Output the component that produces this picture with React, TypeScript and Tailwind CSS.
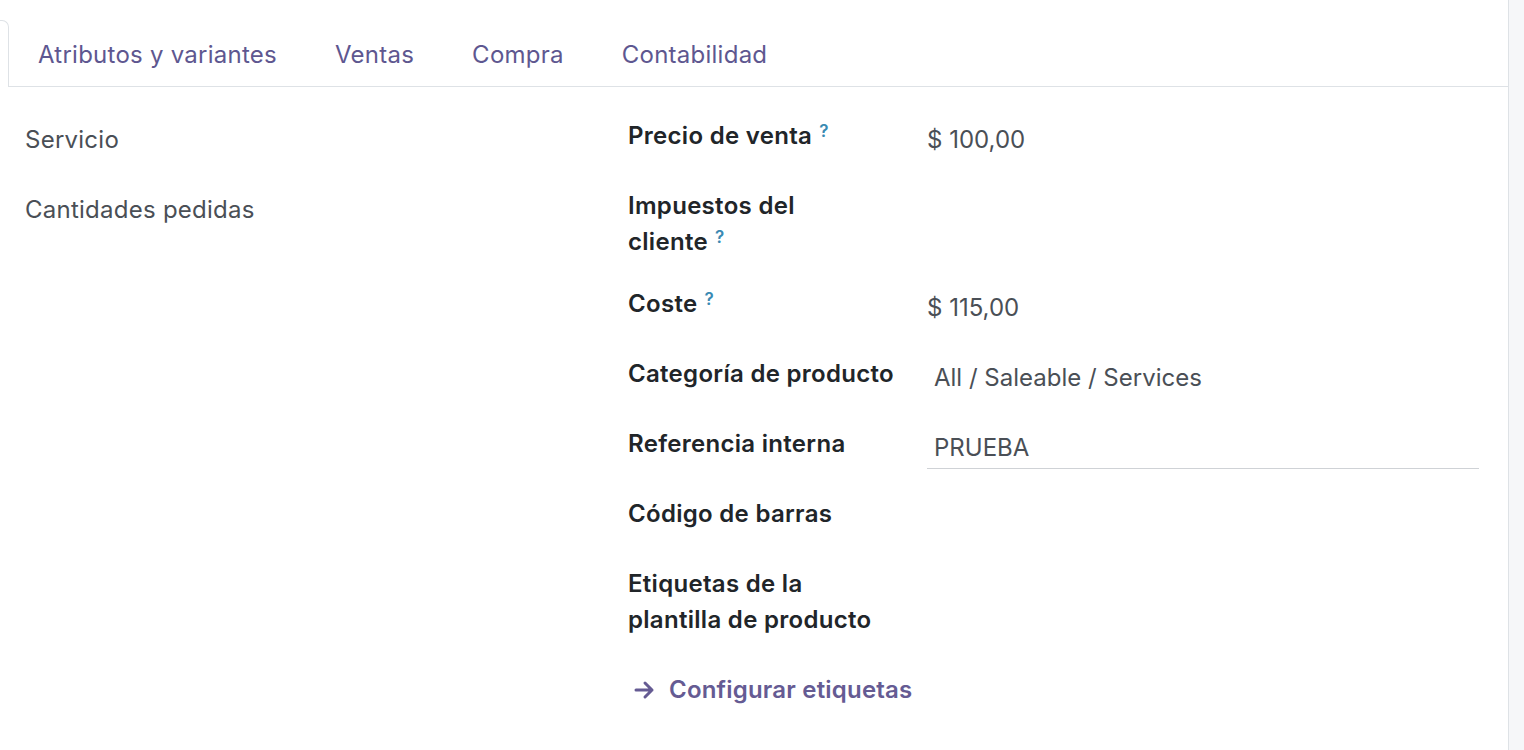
import React from "react";

const Help = () => (
  <sup className="ml-[7px] text-[17px] font-semibold text-[#3a8ab3] relative top-[-7px] tracking-normal">?</sup>
);

export default function App() {
  const tabs = ["Atributos y variantes", "Ventas", "Compra", "Contabilidad"];
  const rows: { label: React.ReactNode; value?: React.ReactNode }[] = [
    {
      label: (
        <>
          Precio de venta
          <Help />
        </>
      ),
      value: <span>$ 100,00</span>,
    },
    {
      label: (
        <>
          Impuestos del
          <br />
          cliente
          <Help />
        </>
      ),
    },
    {
      label: (
        <>
          Coste
          <Help />
        </>
      ),
      value: <span>$ 115,00</span>,
    },
    {
      label: <>Categoría de producto</>,
      value: <span className="pl-[7px]">All / Saleable / Services</span>,
    },
    {
      label: <>Referencia interna</>,
      value: (
        <div className="border-b border-[#cfd2d6] h-[41px] pl-[7px] flex items-center">PRUEBA</div>
      ),
    },
    { label: <>Código de barras</> },
    {
      label: (
        <>
          Etiquetas de la
          <br />
          plantilla de producto
        </>
      ),
    },
  ];

  return (
    <div
      className="flex min-h-[750px] bg-white text-[#212529]"
      style={{ fontFamily: "Inter, 'Noto Sans', 'Liberation Sans', sans-serif" }}
    >
      <div className="w-[1509px] shrink-0 border-r border-[#dee2e6] flex flex-col">
        <div className="pt-[20px] flex">
          <div className="w-[9px] h-[67px] border-t border-r border-[#dee2e6] rounded-tr-[7px]" />
          <div className="flex-1 flex border-b border-[#dee2e6] h-[67px] items-center pt-[3px]">
            {tabs.map((t) => (
              <div key={t} className="px-[29px] text-[24px] tracking-[0.25px] text-[#5e5790]">
                {t}
              </div>
            ))}
          </div>
        </div>
        <div className="flex pt-[31px] pl-[25px]">
          <div className="w-[603px] flex flex-col gap-[26px] text-[24px] tracking-[0.25px] text-[#4a4f56]">
            <div className="h-[44px] flex items-center">Servicio</div>
            <div className="h-[44px] flex items-center">Cantidades pedidas</div>
          </div>
          <div className="w-[851px]">
            <div className="grid grid-cols-[299px_1fr] gap-y-[26px] text-[24px]">
              {rows.map((r, i) => (
                <React.Fragment key={i}>
                  <div className="font-semibold tracking-[0.3px] leading-[36px] text-[#212529]">{r.label}</div>
                  <div className="min-h-[44px] flex flex-col justify-center text-[#4a4f56]">
                    {r.value}
                  </div>
                </React.Fragment>
              ))}
            </div>
            <div className="mt-[30px] flex items-center gap-[13px] pl-[6px] text-[24px] font-semibold tracking-[0.2px] text-[#655b93] h-[44px]">
              <svg width="22" height="20" viewBox="0 0 22 20" fill="none">
                <path
                  d="M2 10h16M11 3l7 7-7 7"
                  stroke="#655b93"
                  strokeWidth="3"
                  strokeLinecap="round"
                  strokeLinejoin="round"
                />
              </svg>
              <span>Configurar etiquetas</span>
            </div>
          </div>
        </div>
      </div>
      <div className="flex-1 bg-[#f6f7f9]" />
    </div>
  );
}
